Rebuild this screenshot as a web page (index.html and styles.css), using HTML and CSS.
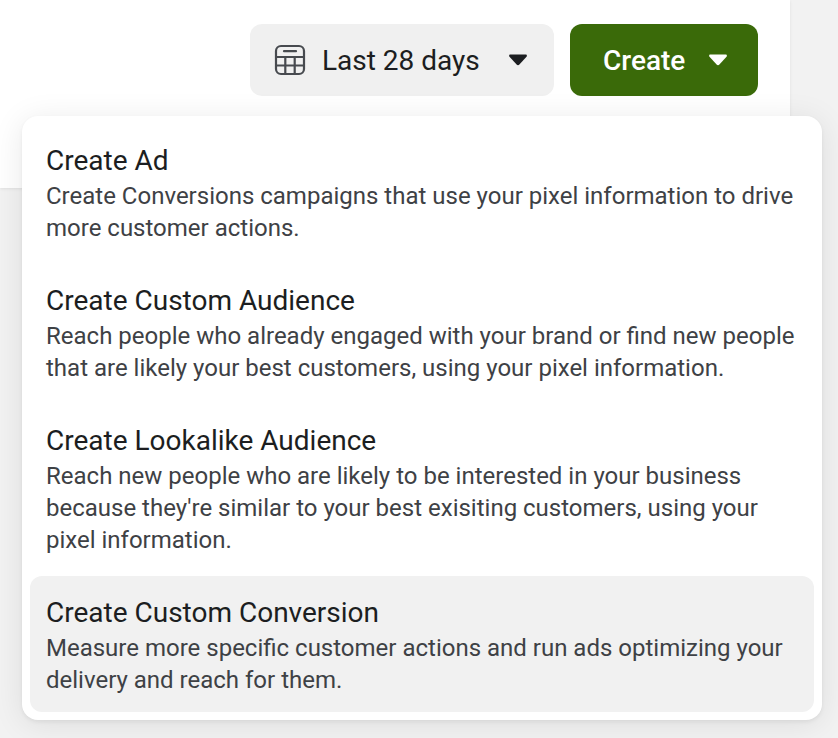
FILE: index.html
```html
<!DOCTYPE html>
<html lang="en">
<head>
<meta charset="utf-8">
<title>Create menu</title>
<link rel="stylesheet" href="styles.css">
</head>
<body>
<div class="page">
  <header class="panel">
    <button class="btn btn-date">
      <svg class="cal" width="32" height="32" viewBox="0 0 32 32" fill="none" stroke="#474a4f" stroke-width="2.2">
        <rect x="2" y="2" width="28" height="28" rx="5"/>
        <path d="M2 13H30M2 21.5H30M11.3 13V30M20.7 13V30"/>
        <path d="M10 7.2H22" stroke-linecap="round"/>
      </svg>
      <span class="date-label">Last 28 days</span>
      <svg class="caret" width="18" height="12" viewBox="0 0 18 12"><path d="M1.4 0.5H16.6C17.8 0.5 18.3 1.8 17.5 2.7L10.4 10.6C9.6 11.4 8.4 11.4 7.6 10.6L0.5 2.7C-0.3 1.8 0.2 0.5 1.4 0.5Z" fill="#1c1e21"/></svg>
    </button>
    <button class="btn btn-create">
      <span class="create-label">Create</span>
      <svg class="caret" width="18" height="12" viewBox="0 0 18 12"><path d="M1.4 0.5H16.6C17.8 0.5 18.3 1.8 17.5 2.7L10.4 10.6C9.6 11.4 8.4 11.4 7.6 10.6L0.5 2.7C-0.3 1.8 0.2 0.5 1.4 0.5Z" fill="#fff"/></svg>
    </button>
  </header>
  <ul class="menu">
    <li class="item">
      <div class="item-title">Create Ad</div>
      <div class="item-desc">Create Conversions campaigns that use your pixel information to drive more customer actions.</div>
    </li>
    <li class="item">
      <div class="item-title">Create Custom Audience</div>
      <div class="item-desc">Reach people who already engaged with your brand or find new people that are likely your best customers, using your pixel information.</div>
    </li>
    <li class="item">
      <div class="item-title">Create Lookalike Audience</div>
      <div class="item-desc">Reach new people who are likely to be interested in your business because they're similar to your best exisiting customers, using your pixel information.</div>
    </li>
    <li class="item item-active">
      <div class="item-title">Create Custom Conversion</div>
      <div class="item-desc">Measure more specific customer actions and run ads optimizing your delivery and reach for them.</div>
    </li>
  </ul>
</div>
</body>
</html>
```
FILE: styles.css
```css
* { box-sizing: border-box; }
html, body { margin: 0; padding: 0; }
body {
  width: 838px;
  height: 738px;
  overflow: hidden;
  background: #f2f2f2;
  font-family: Roboto, "Liberation Sans", sans-serif;
}
.page { position: relative; width: 838px; height: 738px; }
.panel {
  width: 790px;
  height: 188px;
  background: #fff;
  box-shadow: 0 1px 3px rgba(0, 0, 0, 0.08);
  padding: 24px 32px 0 0;
  display: flex;
  justify-content: flex-end;
  align-items: flex-start;
  gap: 16px;
}
.btn {
  height: 72px;
  border: 0;
  border-radius: 12px;
  display: flex;
  align-items: center;
  font-family: inherit;
  padding: 0;
}
.btn-date {
  width: 304px;
  background: #f0f0f0;
  color: #1c1e21;
  padding-left: 24px;
}
.cal { flex: none; }
.date-label { font-size: 28px; margin-left: 16px; }
.btn-date .caret { margin-left: 29px; }
.btn-create {
  width: 188px;
  background: #3a6a09;
  color: #fff;
  padding-left: 33px;
}
.create-label { font-size: 28px; font-weight: 500; }
.btn-create .caret { margin-left: 24px; }
.menu {
  position: absolute;
  left: 22px;
  top: 116px;
  width: 800px;
  margin: 0;
  padding: 8px;
  list-style: none;
  background: #fff;
  border-radius: 16px;
  box-shadow: 0 4px 32px rgba(0, 0, 0, 0.09), 0 2px 4px rgba(0, 0, 0, 0.06);
  display: flex;
  flex-direction: column;
  gap: 4px;
}
.item { padding: 21px 16px 16px; border-radius: 12px; }
.item-active { background: #f1f1f1; }
.item-title { font-size: 28px; line-height: 32px; color: #1c1e21; }
.item-desc { font-size: 24px; line-height: 32px; color: #3e4145; margin-top: 3px; }
```
